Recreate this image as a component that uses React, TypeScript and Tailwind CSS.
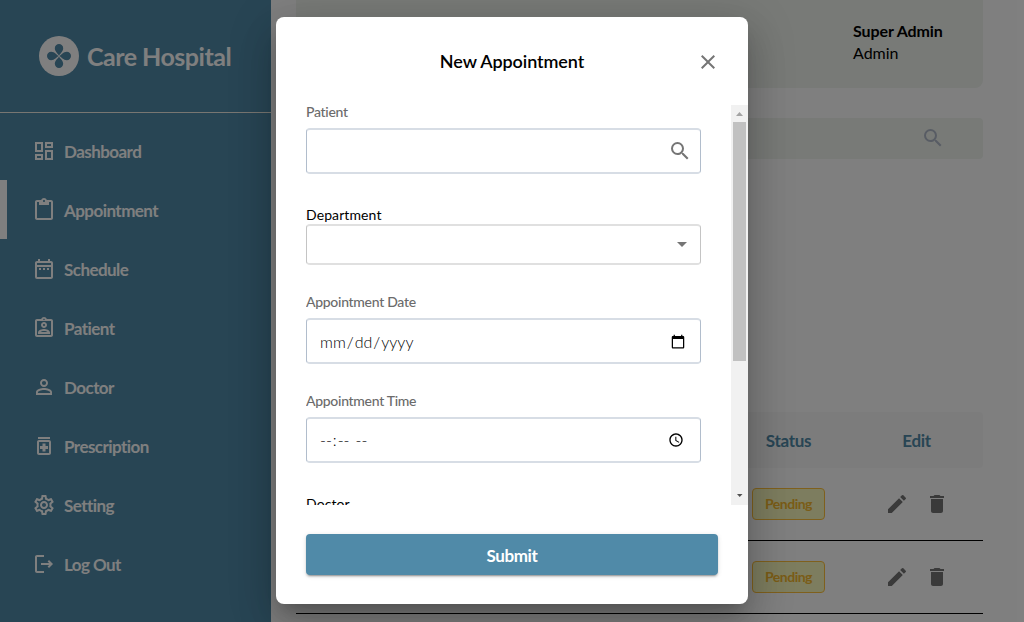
import React from "react";
import {
  MdOutlineDashboard, MdContentPaste, MdOutlineDateRange, MdOutlineAssignmentInd, MdPersonOutline,
  MdOutlineMedication, MdOutlineSettings, MdOutlineLogout, MdSearch, MdClose, MdEdit, MdDelete, MdArrowDropDown,
} from "react-icons/md";

const nav = [
  { label: "Dashboard", icon: MdOutlineDashboard },
  { label: "Appointment", icon: MdContentPaste, active: true },
  { label: "Schedule", icon: MdOutlineDateRange },
  { label: "Patient", icon: MdOutlineAssignmentInd },
  { label: "Doctor", icon: MdPersonOutline },
  { label: "Prescription", icon: MdOutlineMedication },
  { label: "Setting", icon: MdOutlineSettings },
  { label: "Log Out", icon: MdOutlineLogout },
];

function Logo() {
  return (
    <svg width="40" height="40" viewBox="0 0 40 40">
      <circle cx="20" cy="20" r="20" fill="#fff" />
      {[0, 90, 180, 270].map((a) => (
        <path key={a} d="M20 19.6C19.2 17.8 15.8 15.6 15.8 12.2a4.2 4.2 0 0 1 8.4 0c0 3.4-3.4 5.6-4.2 7.4z" fill="#508aa8" transform={`rotate(${a} 20 20)`} />
      ))}
    </svg>
  );
}

function Sidebar() {
  return (
    <aside className="flex h-full w-[271px] shrink-0 flex-col bg-[#508aa8] text-white">
      <div className="flex h-[113px] items-center gap-2 border-b border-[#f0ece4] pl-[39px]">
        <Logo />
        <span className="pt-px text-[25px] font-bold tracking-[-0.5px]">Care Hospital</span>
      </div>
      <nav className="flex flex-col pt-2">
        {nav.map(({ label, icon: Icon, active }) => (
          <div key={label} className={`flex h-[59px] items-center gap-2 border-l-[7px] pl-[25px] pt-px ${active ? "border-white" : "border-transparent"}`}>
            <Icon size={24} />
            <span className="pt-px text-[17px] font-bold tracking-[-0.55px]">{label}</span>
          </div>
        ))}
      </nav>
    </aside>
  );
}

function Row() {
  return (
    <div className="flex h-[73px] shrink-0 items-center justify-end border-b border-black">
      <div className="mr-[60px] flex h-8 w-[73px] items-center justify-center rounded border border-[#ffc13b] bg-[#fbfbbe] text-sm font-bold tracking-[-0.5px] text-[#f5b82e]">Pending</div>
      <div className="flex w-[98px] gap-4 text-[#757575]">
        <MdEdit size={24} />
        <MdDelete size={24} />
      </div>
    </div>
  );
}

function Page() {
  return (
    <main className="flex h-full w-[687px] shrink-0 flex-col">
      <header className="flex h-[88px] shrink-0 justify-end rounded-b-lg bg-[#f0f4ef] pt-5">
        <div className="w-[130px] text-base leading-[22px]">
          <div className="font-bold tracking-[-0.1px]">Super Admin</div>
          <div>Admin</div>
        </div>
      </header>
      <div className="mt-[30px] flex h-[41px] shrink-0 items-center justify-end rounded bg-[#f0f4ef] pb-[2px] pr-[38px] text-[#b0b9c8]">
        <MdSearch size={24} />
      </div>
      <div className="mt-[253px] flex h-14 shrink-0 items-center justify-end rounded-sm bg-[#f9f9f9] pt-px text-[17px] font-bold tracking-[-0.3px] text-[#508aa8]">
        <span className="w-[73px] text-center">Status</span>
        <span className="ml-[27px] w-[131px] pr-0.5 text-center">Edit</span>
      </div>
      <Row />
      <Row />
    </main>
  );
}

const label = "text-[14px] leading-[18px] tracking-[0.1px]";
const fieldLabel = "text-[14px] leading-[18px] font-medium tracking-[-0.3px] text-[#6b6b6b]";
const field = "flex w-[395px] shrink-0 items-center rounded-[4px] border-x border-y-2 border-x-[#b1bdcc] border-y-[#d7dde5]";

function Modal() {
  return (
    <section className="mt-[17px] flex h-[587px] w-[472px] flex-col rounded-lg bg-white shadow-[0px_11px_15px_-7px_rgba(0,0,0,0.2),0px_24px_38px_3px_rgba(0,0,0,0.14),0px_9px_46px_8px_rgba(0,0,0,0.12)]">
      <div className="flex h-[88px] shrink-0 items-center pr-[28px] pt-px">
        <h2 className="flex-1 pb-0.5 pl-[28px] text-center text-lg font-semibold tracking-[-0.1px]">New Appointment</h2>
        <MdClose size={24} className="-ml-6 text-[#757575]" />
      </div>
      <div className="flex h-[400px] shrink-0 justify-between overflow-hidden pl-[30px]">
        <div className="flex h-[400px] flex-col overflow-hidden">
          <div className={`${fieldLabel} -mt-0.5`}>Patient</div>
          <div className={`${field} mt-[7px] h-[46px] justify-end pr-2`}>
            <MdSearch size={24} className="text-[#757575]" />
          </div>
          <div className={`${label} mt-8`}>Department</div>
          <div className="flex h-[41px] w-[395px] shrink-0 items-center justify-end rounded-[4px] border-x border-y-2 border-x-[#c4c4c4] border-y-[#e0e0e0] pb-px pr-[6px]">
            <MdArrowDropDown size={24} className="text-[#757575]" />
          </div>
          <div className={`${fieldLabel} mt-7`}>Appointment Date</div>
          <div className={`${field} mt-[7px] h-[46px] pl-3 pr-3 pt-px`}>
            <input type="date" className="w-full bg-transparent text-base font-light text-black outline-none" />
          </div>
          <div className={`${fieldLabel} mt-7`}>Appointment Time</div>
          <div className={`${field} mt-[7px] h-[46px] px-3`}>
            <input type="time" className="w-full bg-transparent text-base font-light tracking-[-0.7px] text-black outline-none" />
          </div>
          <div className={`${label} mt-8`}>Doctor</div>
        </div>
        <div className="flex w-[17px] flex-col items-center bg-[#f1f1f1]">
          <svg width="17" height="17" viewBox="0 0 17 17" fill="#a3a3a3"><path d="M5 11 8.5 7l3.5 4z" /></svg>
          <div className="h-[239px] w-[13px] bg-[#c1c1c1]" />
          <svg className="mt-auto" width="17" height="17" viewBox="0 0 17 17" fill="#505050"><path d="M6 6h5.5l-2.8 3z" /></svg>
        </div>
      </div>
      <div className="px-[30px] pt-[29px]">
        <button className="h-[41px] w-full rounded bg-[#508aa8] pt-0.5 text-[17px] font-bold tracking-[-0.4px] text-white shadow-[0px_3px_1px_-2px_rgba(0,0,0,0.2),0px_2px_2px_0px_rgba(0,0,0,0.14),0px_1px_5px_0px_rgba(0,0,0,0.12)]">Submit</button>
      </div>
    </section>
  );
}

export default function App() {
  return (
    <div className="relative h-[622px] w-[1024px] overflow-hidden bg-white font-[Lato,sans-serif] text-black">
      <div className="flex h-full gap-[25px]">
        <Sidebar />
        <Page />
      </div>
      <div className="absolute inset-0 flex items-start justify-center bg-black/50">
        <Modal />
      </div>
    </div>
  );
}
